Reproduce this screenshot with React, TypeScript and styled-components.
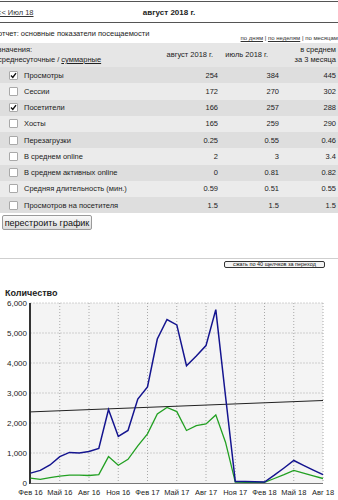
import React from "react";
import styled, { createGlobalStyle } from "styled-components";

const GlobalStyle = createGlobalStyle`
  html, body { margin: 0; padding: 0; background: #fff; }
  body {
    font-family: "Liberation Sans", Arial, sans-serif;
    color: #222;
    width: 338px;
    overflow: hidden;
  }
`;

const Page = styled.div`
  width: 338px;
  padding-top: 1px;
  white-space: nowrap;
`;

const TopBar = styled.div`
  display: grid;
  grid-template-columns: 1fr auto 1fr;
  align-items: center;
  height: 20px;
  border-top: 1px solid #555;
  border-bottom: 1px solid #555;
  font-size: 7.5px;
`;

const NavLink = styled.a`
  color: #333;
  text-decoration: underline;
  margin-left: -3px;
`;

const MonthTitle = styled.b`
  font-size: 8px;
  font-weight: bold;
`;

const ReportRow = styled.div`
  display: flex;
  justify-content: space-between;
  align-items: flex-end;
  height: 20px;
  padding-bottom: 2px;
  box-sizing: border-box;
  font-size: 7.5px;
`;

const ReportTitle = styled.span`
  margin-left: -2px;
  margin-bottom: 3px;
`;

const PeriodLinks = styled.span`
  font-size: 6px;
  color: #333;
  a { color: #333; text-decoration: underline; }
`;

const Table = styled.div`
  font-size: 7.5px;
`;

const Row = styled.div<{ $shade: "head" | "dark" | "light" }>`
  display: grid;
  grid-template-columns: 1fr 56px 61px 57px;
  align-items: center;
  height: ${({ $shade }) => ($shade === "head" ? "24px" : "16.25px")};
  background: ${({ $shade }) =>
    $shade === "head" ? "#e6e6e6" : $shade === "dark" ? "#dedede" : "#ebebeb"};
`;

const HeadLabel = styled.div`
  line-height: 10px;
  margin-left: -2px;
  a { color: #222; text-decoration: underline; }
`;

const HeadCell = styled.div<{ $pad: number }>`
  text-align: right;
  line-height: 10px;
  padding-right: ${({ $pad }) => $pad}px;
`;

const RowLabel = styled.label`
  display: flex;
  align-items: center;
  gap: 6px;
  padding-left: 9px;
`;

const Check = styled.span<{ $on: boolean }>`
  width: 7px;
  height: 7px;
  border: 1px solid #a9a9a9;
  border-radius: 1px;
  background: #fff;
  display: flex;
  align-items: center;
  justify-content: center;
`;

const Value = styled.div`
  text-align: right;
  padding-right: 2px;
`;

const RebuildButton = styled.button`
  display: block;
  margin: 2px 0 0 2px;
  width: 90px;
  height: 15px;
  padding: 0;
  font-family: inherit;
  font-size: 9px;
  color: #111;
  border: 1px solid #9a9a9a;
  border-radius: 2px;
  background: linear-gradient(#fafafa, #dcdcdc);
`;

const Divider = styled.div`
  margin-top: 28px;
  border-top: 1px solid #cfcfcf;
  display: flex;
  justify-content: flex-end;
  padding-right: 13px;
`;

const SmallButton = styled.button`
  display: block;
  margin-top: 2px;
  width: 101px;
  height: 7px;
  padding: 0;
  font-family: inherit;
  font-size: 5.5px;
  line-height: 5px;
  color: #111;
  border: 1px solid #333;
  border-radius: 2px;
  background: #f4f4f4;
`;

const ChartTitle = styled.div`
  margin-top: 20px;
  padding-left: 5px;
  font-size: 9px;
  font-weight: bold;
  height: 11px;
`;

const ChartBox = styled.div`
  height: 200px;
  svg { display: block; }
`;

const rows = [
  { name: "Просмотры", on: true, v: ["254", "384", "445"] },
  { name: "Сессии", on: false, v: ["172", "270", "302"] },
  { name: "Посетители", on: true, v: ["166", "257", "288"] },
  { name: "Хосты", on: false, v: ["165", "259", "290"] },
  { name: "Перезагрузки", on: false, v: ["0.25", "0.55", "0.46"] },
  { name: "В среднем online", on: false, v: ["2", "3", "3.4"] },
  { name: "В среднем активных online", on: false, v: ["0", "0.81", "0.82"] },
  { name: "Средняя длительность (мин.)", on: false, v: ["0.59", "0.51", "0.55"] },
  { name: "Просмотров на посетителя", on: false, v: ["1.5", "1.5", "1.5"] },
];

const views = [
  330, 420, 600, 880, 1020, 1000, 1050, 1150, 2450, 1550, 1750, 2800, 3200, 4800,
  5450, 5270, 3910, 4230, 4580, 5780, 2900, 50, 50, 40, 30, 260, 500, 750, 590, 430, 280,
];
const visitors = [
  160, 120, 180, 230, 260, 260, 250, 280, 880, 590, 790, 1240, 1640, 2300, 2520,
  2380, 1750, 1910, 1970, 2270, 1360, 30, 20, 20, 20, 150, 280, 420, 330, 240, 150,
];
const monthLabels = ["Фев 16", "Май 16", "Авг 16", "Ноя 16", "Фев 17", "Май 17", "Авг 17", "Ноя 17", "Фев 18", "Май 18", "Авг 18"];

const X0 = 30.5;
const X1 = 323;
const Y0 = 4;
const Y1 = 184;
const px = (i: number) => X0 + ((X1 - X0) * i) / 30;
const py = (v: number) => Y1 - ((Y1 - Y0) * v) / 6000;
const toPoints = (data: number[]) => data.map((v, i) => `${px(i).toFixed(1)},${py(v).toFixed(1)}`).join(" ");

const Chart = () => (
  <svg width="338" height="200" viewBox="0 0 338 200" fontFamily="Liberation Sans, Arial, sans-serif">
    <rect x={X0} y={Y0} width={X1 - X0} height={Y1 - Y0} fill="#f4f4f4" />
    {[1, 2, 3, 4, 5, 6].map((k) => (
      <line key={k} x1={X0} x2={X1} y1={py(k * 1000)} y2={py(k * 1000)} stroke="#a8a8a8" strokeDasharray="1 2" />
    ))}
    {monthLabels.map((_, k) => (
      <line key={k} x1={px(k * 3)} x2={px(k * 3)} y1={Y0} y2={Y1} stroke="#a8a8a8" strokeDasharray="1 2" />
    ))}
    <line x1={X0 - 0.5} x2={X0 - 0.5} y1={Y0} y2={Y1 + 1} stroke="#333" strokeWidth="2" />
    <line x1={X0} x2={X1} y1={Y1 + 0.5} y2={Y1 + 0.5} stroke="#777" />
    {[0, 1, 2, 3, 4, 5, 6].map((k) => (
      <text key={k} x={27} y={py(k * 1000) + 3} fontSize="8" textAnchor="end" fill="#222">
        {k === 0 ? "0" : `${k},000`}
      </text>
    ))}
    {monthLabels.map((m, k) => (
      <text key={m} x={px(k * 3)} y={196} fontSize="7.5" textAnchor="middle" fill="#222">
        {m}
      </text>
    ))}
    <line x1={X0} y1={py(2370)} x2={X1} y2={py(2750)} stroke="#222" strokeWidth="1" />
    <polyline points={toPoints(visitors)} fill="none" stroke="#22a022" strokeWidth="1.3" />
    <polyline points={toPoints(views)} fill="none" stroke="#14148f" strokeWidth="1.5" />
  </svg>
);

export default function App() {
  return (
    <Page>
      <GlobalStyle />
      <TopBar>
        <NavLink href="#">&lt;&lt; Июл 18</NavLink>
        <MonthTitle>август 2018 г.</MonthTitle>
        <span />
      </TopBar>
      <ReportRow>
        <ReportTitle>отчет: основные показатели посещаемости</ReportTitle>
        <PeriodLinks>
          <a href="#">по дням</a> | <a href="#">по неделям</a> | по месяцам
        </PeriodLinks>
      </ReportRow>
      <Table>
        <Row $shade="head">
          <HeadLabel>
            значения:
            <br />
            среднесуточные / <a href="#">суммарные</a>
          </HeadLabel>
          <HeadCell $pad={7}>август 2018 г.</HeadCell>
          <HeadCell $pad={13}>июль 2018 г.</HeadCell>
          <HeadCell $pad={2}>
            в среднем
            <br />
            за 3 месяца
          </HeadCell>
        </Row>
        {rows.map((r, i) => (
          <Row key={r.name} $shade={i % 2 === 0 ? "dark" : "light"}>
            <RowLabel>
              <Check $on={r.on}>
                {r.on && (
                  <svg width="7" height="7" viewBox="0 0 7 7">
                    <path d="M1 3.6 L2.8 5.4 L6 1.2" fill="none" stroke="#111" strokeWidth="1.4" />
                  </svg>
                )}
              </Check>
              {r.name}
            </RowLabel>
            {r.v.map((v, j) => (
              <Value key={j}>{v}</Value>
            ))}
          </Row>
        ))}
      </Table>
      <RebuildButton>перестроить график</RebuildButton>
      <Divider>
        <SmallButton>сжать по 40 щелчков за переход</SmallButton>
      </Divider>
      <ChartTitle>Количество</ChartTitle>
      <ChartBox>
        <Chart />
      </ChartBox>
    </Page>
  );
}
